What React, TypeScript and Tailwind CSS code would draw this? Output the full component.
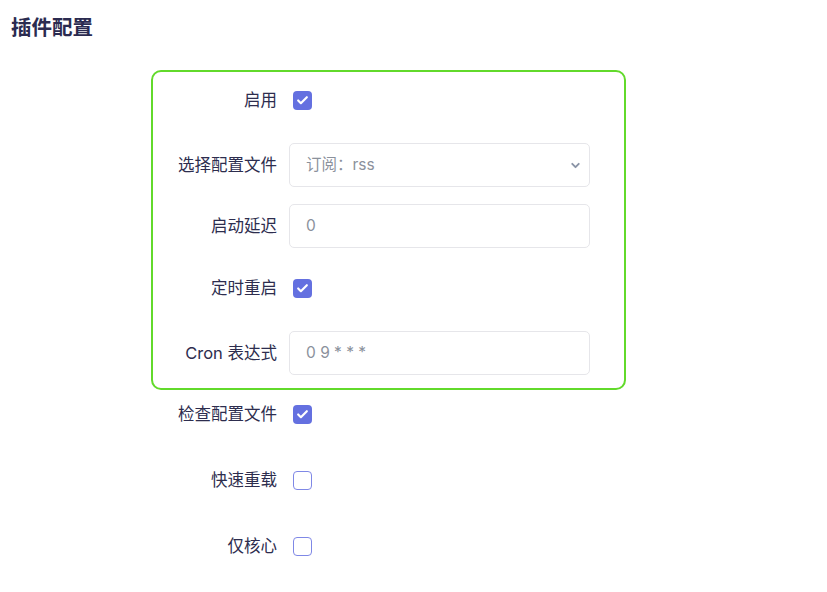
import { Check, ChevronDown } from 'lucide-react';

const font = 'font-["Inter","Noto_Sans_CJK_SC",sans-serif]';

function Label({ text }: { text: string }) {
  return <div className="w-[124px] text-right text-[16.5px] text-[#2d2d4e]">{text}</div>;
}

function Box({ checked }: { checked: boolean }) {
  return checked ? (
    <div className="ml-[16px] w-[19px] h-[19px] rounded-[4px] bg-[#6470e0] flex items-center justify-center">
      <Check className="w-[13px] h-[13px] text-white" strokeWidth={4} />
    </div>
  ) : (
    <div className="ml-[16px] w-[19px] h-[19px] rounded-[4px] border-[1.5px] border-[#7f88e6] bg-white" />
  );
}

function CheckRow({ label, checked, className = '' }: { label: string; checked: boolean; className?: string }) {
  return (
    <div className={`flex items-center h-[44px] ${className}`}>
      <Label text={label} />
      <Box checked={checked} />
    </div>
  );
}

function InputRow({ label, value, select, className = '' }: { label: string; value: string; select?: boolean; className?: string }) {
  return (
    <div className={`flex items-center h-[44px] ${className}`}>
      <Label text={label} />
      <div className="ml-[12px] w-[301px] h-[44px] rounded-[5px] border border-[#e6e6ea] bg-white flex items-center justify-between pl-[16px] pr-[7px] text-[15.5px] text-[#8b919c]">
        <span>{value}</span>
        {select && <ChevronDown className="w-[13px] h-[13px] text-[#8a94a6]" strokeWidth={3.5} />}
      </div>
    </div>
  );
}

export default function App() {
  return (
    <div className={`w-[827px] h-[592px] bg-white ${font}`}>
      <h1 className="pl-[11px] pt-[13px] leading-[30px] text-[20.5px] font-bold text-[#2b2b50]">插件配置</h1>
      <div className="ml-[151px] mt-[27px] w-[475px]">
        <div className="border-2 border-[#62da2b] rounded-[10px] pt-[6px] pb-[13px]">
          <CheckRow label="启用" checked />
          <InputRow label="选择配置文件" value="订阅：rss" select className="mt-[21px]" />
          <InputRow label="启动延迟" value="0" className="mt-[17px]" />
          <CheckRow label="定时重启" checked className="mt-[18px]" />
          <InputRow label="Cron 表达式" value="0 9 * * *" className="mt-[21px]" />
        </div>
        <div className="px-[2px]">
          <CheckRow label="检查配置文件" checked className="mt-[2px]" />
          <CheckRow label="快速重载" checked={false} className="mt-[22px]" />
          <CheckRow label="仅核心" checked={false} className="mt-[22px]" />
        </div>
      </div>
    </div>
  );
}
